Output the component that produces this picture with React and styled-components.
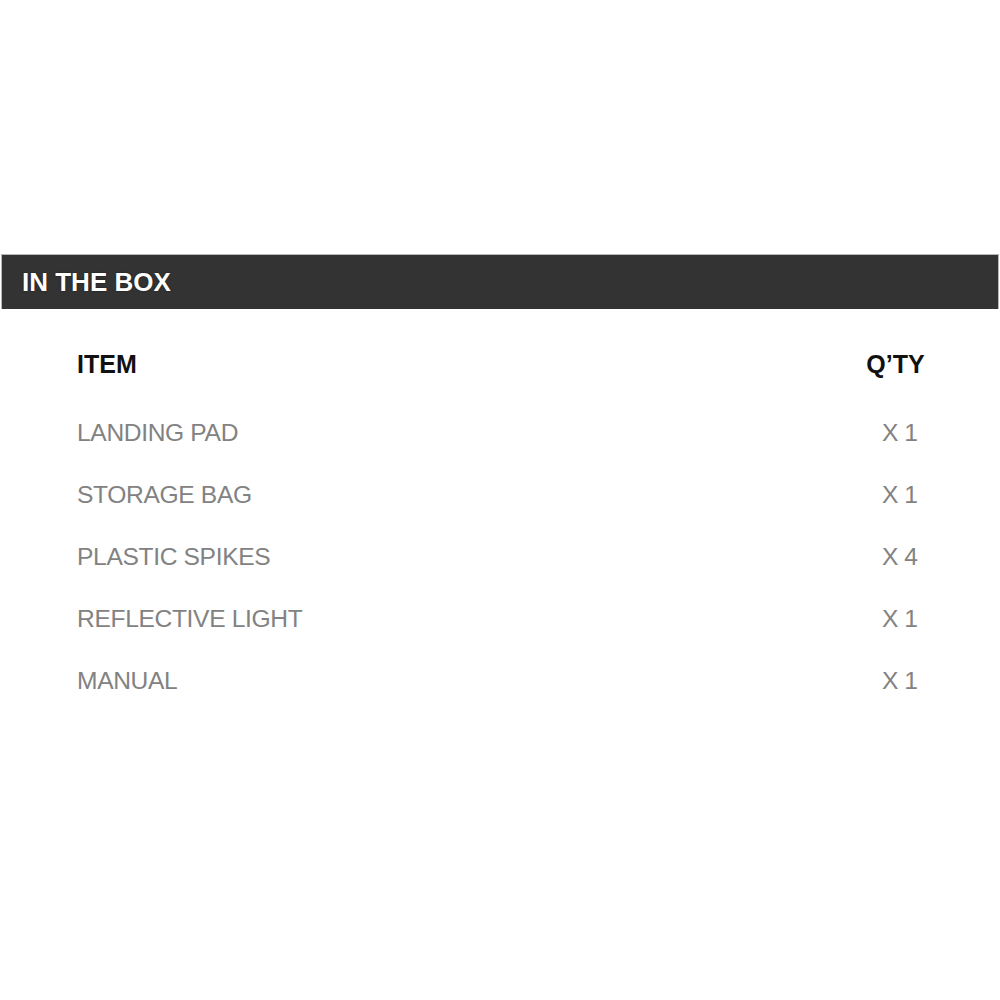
import styled, { createGlobalStyle } from "styled-components";

const items = [
  { name: "LANDING PAD", qty: 1 },
  { name: "STORAGE BAG", qty: 1 },
  { name: "PLASTIC SPIKES", qty: 4 },
  { name: "REFLECTIVE LIGHT", qty: 1 },
  { name: "MANUAL", qty: 1 },
];

export default function App() {
  return (
    <>
      <GlobalStyle />
      <Page>
        <TitleBar>IN THE BOX</TitleBar>
        <Table>
          <HeadRow>
            <HeadCell>ITEM</HeadCell>
            <HeadCell $qty>Q’TY</HeadCell>
          </HeadRow>
          {items.map((item) => (
            <Row key={item.name}>
              <Cell>{item.name}</Cell>
              <Cell $qty>X {item.qty}</Cell>
            </Row>
          ))}
        </Table>
      </Page>
    </>
  );
}

const GlobalStyle = createGlobalStyle`
  html, body {
    margin: 0;
    padding: 0;
    background: #fff;
  }
  body {
    font-family: "Liberation Sans", Arial, sans-serif;
  }
`;

const Page = styled.div`
  width: 1000px;
  height: 1000px;
  padding-top: 254px;
  box-sizing: border-box;
`;

const TitleBar = styled.div`
  margin: 0 1px 0 1px;
  height: 55px;
  box-sizing: border-box;
  border: 1px solid #b8b8b8;
  border-bottom: none;
  background: #333333;
  color: #fff;
  font-size: 26px;
  font-weight: 700;
  padding-left: 20px;
  display: flex;
  align-items: center;
  text-shadow: 0 0 2px rgba(0, 0, 0, 0.6);
`;

const Table = styled.div`
  padding: 43px 60px 0 77px;
  display: flex;
  flex-direction: column;
  gap: 37px;
`;

const HeadRow = styled.div`
  display: grid;
  grid-template-columns: 1fr 80px;
  margin-bottom: 6px;
`;

const Row = styled(HeadRow)`
  margin-bottom: 0;
`;

const HeadCell = styled.div`
  font-size: 25px;
  line-height: 25px;
  font-weight: 700;
  color: #111;
  text-align: ${(p) => (p.$qty ? "center" : "left")};
  padding-right: ${(p) => (p.$qty ? "9px" : "0")};
`;

const Cell = styled.div`
  font-size: 24.6px;
  line-height: 25px;
  font-weight: 400;
  letter-spacing: ${(p) => (p.$qty ? "0" : "-0.35px")};
  color: #828282;
  text-align: ${(p) => (p.$qty ? "center" : "left")};
  word-spacing: ${(p) => (p.$qty ? "-1px" : "0")};
`;
